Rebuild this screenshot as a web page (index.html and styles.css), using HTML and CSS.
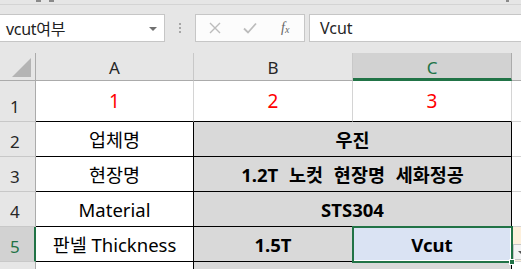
FILE: index.html
```html
<!DOCTYPE html>
<html>
<head>
<meta charset="utf-8">
<link rel="stylesheet" href="styles.css">
</head>
<body>
<div class="app">
  <div class="top">
    <span class="nub n1"></span><span class="nub n2"></span><span class="grow"></span><span class="nub n3"></span>
  </div>
  <div class="fbar">
    <div class="namebox"><span class="nametext">vcut여부</span><span class="dd"></span></div>
    <div class="dots"><i></i><i></i><i></i></div>
    <div class="btnbox">
      <svg class="ic-x" width="12" height="12" viewBox="0 0 12 12"><path d="M1 1L11 11M11 1L1 11" stroke="#bcbcbc" stroke-width="1.4" fill="none"/></svg>
      <svg class="ic-ok" width="14" height="12" viewBox="0 0 14 12"><path d="M1 6.5L5 10.5L13 1.5" stroke="#bcbcbc" stroke-width="1.8" fill="none"/></svg>
      <span class="fx">f<sub>x</sub></span>
    </div>
    <div class="formula">Vcut</div>
  </div>
  <div class="sheet">
    <div class="corner"><span class="tri"></span></div>
    <div class="ch">A</div>
    <div class="ch">B</div>
    <div class="ch sel">C</div>
    <div class="ch last"></div>

    <div class="rh">1</div>
    <div class="c red">1</div>
    <div class="c red">2</div>
    <div class="c red">3</div>
    <div class="c last"></div>

    <div class="rh">2</div>
    <div class="c t">업체명</div>
    <div class="c t g b span2">우진</div>
    <div class="c last"></div>

    <div class="rh">3</div>
    <div class="c t">현장명</div>
    <div class="c t g b span2 wide">1.2T 노컷 현장명 세화정공</div>
    <div class="c last"></div>

    <div class="rh">4</div>
    <div class="c t">Material</div>
    <div class="c t g b span2">STS304</div>
    <div class="c last"></div>

    <div class="rh rsel">5</div>
    <div class="c t">판넬 Thickness</div>
    <div class="c t g b">1.5T</div>
    <div class="c t b active">Vcut<span class="handle"></span></div>
    <div class="c last peach"><span class="ddbtn"></span></div>

    <div class="rh end"></div>
    <div class="c t end"></div>
    <div class="c t g span2 end"></div>
    <div class="c last end"></div>
  </div>
</div>
</body>
</html>
```
FILE: styles.css
```css
* { box-sizing: border-box; }
html, body { margin: 0; padding: 0; }
body {
  width: 521px; height: 269px; overflow: hidden;
  background: #e6e6e6;
  font-family: "Noto Sans", "Noto Sans CJK KR", sans-serif;
}
.app { width: 521px; height: 269px; overflow: hidden; }
.top {
  height: 5px; display: flex; align-items: flex-start;
  border-bottom: 1px solid #d4d4d4; background: #e6e6e6;
}
.nub { display: block; height: 2px; width: 5px; background: #8a8a8a; }
.n1 { margin-left: 36px; }
.n2 { margin-left: 8px; }
.n3 { margin-right: 12px; width: 3px; }
.grow { flex: 1; }
.fbar {
  height: 48px; display: flex; align-items: flex-start;
  padding-top: 9px; background: #e6e6e6;
}
.namebox {
  width: 165px; height: 28px; background: #fff;
  border: 1px solid #c6c6c6; border-left: none;
  display: flex; align-items: center; justify-content: space-between;
  padding: 0 7px 0 6px;
}
.nametext { font-size: 16px; color: #222; letter-spacing: -0.3px; }
.dd {
  width: 0; height: 0; border-left: 4px solid transparent; border-right: 4px solid transparent;
  border-top: 4px solid #707070; margin-top: 1px;
}
.dots {
  width: 30px; height: 28px; display: flex; flex-direction: column;
  align-items: center; justify-content: center; gap: 2px;
}
.dots i { display: block; width: 2px; height: 2px; background: #a6a6a6; }
.btnbox {
  width: 110px; height: 28px; background: #fcfcfc; border: 1px solid #c6c6c6;
  display: flex; align-items: center; padding-left: 13px;
}
.ic-x { margin-right: 22px; }
.ic-ok { margin-right: 24px; }
.fx {
  font-family: "Liberation Serif", serif; font-style: italic; font-size: 14px; color: #666;
  line-height: 1;
}
.fx sub { font-size: 10px; vertical-align: -1px; }
.formula {
  flex: 1; height: 28px; margin-left: 4px; background: #fff;
  border: 1px solid #c6c6c6; border-right: none;
  font-size: 16px; color: #262626; padding-left: 10px;
  display: flex; align-items: center;
}
.sheet {
  display: grid;
  grid-template-columns: 36px 158px 159px 159px 1fr;
  grid-template-rows: 28px 41px 35px 35px 35px 35px 20px;
  background: #fff;
}
.corner {
  background: #e6e6e6; border-right: 1px solid #ababab; border-bottom: 1px solid #ababab;
  position: relative;
}
.tri {
  position: absolute; right: 4px; bottom: 3px; width: 0; height: 0;
  border-left: 19px solid transparent; border-bottom: 19px solid #b4b4b4;
}
.ch {
  background: #e6e6e6; border-right: 1px solid #c8c8c8; border-bottom: 1px solid #ababab;
  display: flex; align-items: center; justify-content: center;
  font-size: 17px; color: #262626; padding-top: 1px;
}
.ch.sel { background: #d2d2d2; border-bottom: 3px solid #217346; color: #217346; padding-top: 3px; border-right-color: #ababab; }
.ch.last { border-right: none; }
.rh {
  background: #e6e6e6; border-right: 1px solid #ababab; border-bottom: 1px solid #c8c8c8;
  display: flex; align-items: flex-end; padding: 0 0 3px 10px;
  font-size: 17px; color: #262626; line-height: 1.3;
}
.rh.rsel { background: #d2d2d2; border-right: 2px solid #217346; color: #217346; }
.c {
  border-right: 1px solid #d4d4d4; border-bottom: 1px solid #d4d4d4;
  display: flex; align-items: center; justify-content: center;
  font-size: 18.5px; color: #000; position: relative; white-space: nowrap;
}
.c.red { color: #ff0000; font-size: 19px; }
.c.t { border-right-color: #000; border-bottom-color: #000; }
.sheet > .c.red { border-bottom-color: #000; }
.c.g { background: #d9d9d9; }
.c.b { font-weight: bold; }
.c.wide { word-spacing: 6px; }
.span2 { grid-column: span 2; }
.c.last { border-right: none; }
.c.end, .rh.end { border-bottom: none; }
.c.active {
  background: #dae3f3;
  box-shadow: inset 0 0 0 1px #fff;
  outline: 2px solid #217346; outline-offset: -1px; z-index: 2;
}
.handle {
  position: absolute; right: -4px; bottom: -4px; width: 6px; height: 6px;
  background: #217346; border: 1px solid #fff;
}
.peach { background: #fdf0dc; border-bottom-color: #d4d4d4; }
.ddbtn {
  position: absolute; left: 1px; top: 17px; width: 16px; height: 16px;
  background: #f4f4f4; border: 1px solid #c6c6c6;
}
.ddbtn::after {
  content: ""; position: absolute; left: 4px; top: 6px;
  border-left: 3px solid transparent; border-right: 3px solid transparent; border-top: 3px solid #555;
}
```
